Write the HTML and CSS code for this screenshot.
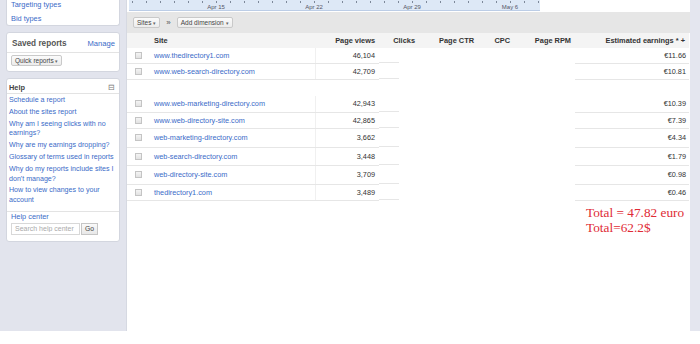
FILE: index.html
```html
<!DOCTYPE html>
<html lang="en">
<head>
    <meta charset="UTF-8">
    <title>Sites report</title>
    <link rel="stylesheet" href="styles.css">
</head>
<body>
    <div class="page">
        <!-- Left column -->
        <div class="sidebar">
            <div class="panel panel-top">
                <a class="side-link" href="#">Targeting types</a>
                <a class="side-link" href="#">Bid types</a>
            </div>

            <div class="panel">
                <div class="panel-head saved-head">
                    <span class="saved-title">Saved reports</span>
                    <a class="manage" href="#">Manage</a>
                </div>
                <div class="saved-body">
                    <span class="btn">Quick reports <span class="caret">&#9662;</span></span>
                </div>
            </div>

            <div class="panel">
                <div class="panel-head help-head">
                    <span class="help-title">Help</span>
                    <span class="collapse">&#8863;</span>
                </div>
                <ul class="help-links">
                    <li><a href="#">Schedule a report</a></li>
                    <li><a href="#">About the sites report</a></li>
                    <li><a href="#">Why am I seeing clicks with no earnings?</a></li>
                    <li><a href="#">Why are my earnings dropping?</a></li>
                    <li><a href="#">Glossary of terms used in reports</a></li>
                    <li><a href="#">Why do my reports include sites I don't manage?</a></li>
                    <li><a href="#">How to view changes to your account</a></li>
                </ul>
                <div class="help-center">
                    <a href="#">Help center</a>
                    <div class="search-row">
                        <input class="search" type="text" placeholder="Search help center">
                        <span class="go">Go</span>
                    </div>
                </div>
            </div>
        </div>

        <!-- Report area -->
        <div class="main">
            <div class="axis">
                <span class="axis-label l1">Apr 15</span>
                <span class="axis-label l2">Apr 22</span>
                <span class="axis-label l3">Apr 29</span>
                <span class="axis-label l4">May 6</span>
            </div>

            <div class="toolbar">
                <span class="btn">Sites <span class="caret">&#9662;</span></span>
                <span class="chev">&raquo;</span>
                <span class="btn">Add dimension <span class="caret">&#9662;</span></span>
            </div>

            <table class="report">
                <colgroup>
                    <col class="c-check">
                    <col class="c-site">
                    <col class="c-views">
                    <col class="c-clicks">
                    <col class="c-ctr">
                    <col class="c-cpc">
                    <col class="c-rpm">
                    <col class="c-earn">
                </colgroup>
                <thead>
                    <tr>
                        <th></th>
                        <th class="left">Site</th>
                        <th>Page views</th>
                        <th>Clicks</th>
                        <th>Page CTR</th>
                        <th>CPC</th>
                        <th>Page RPM</th>
                        <th>Estimated earnings * +</th>
                    </tr>
                </thead>
                <tbody>
                    <tr class="h15">
                        <td><span class="check"></span></td>
                        <td class="site"><a href="#">www.thedirectory1.com</a></td>
                        <td class="num views">46,104</td>
                        <td class="half"></td><td class="blank"></td><td class="blank"></td><td class="blank"></td>
                        <td class="num">€11.66</td>
                    </tr>
                    <tr>
                        <td><span class="check"></span></td>
                        <td class="site"><a href="#">www.web-search-directory.com</a></td>
                        <td class="num views">42,709</td>
                        <td class="half"></td><td class="blank"></td><td class="blank"></td><td class="blank"></td>
                        <td class="num">€10.81</td>
                    </tr>
                    <tr class="gap">
                        <td colspan="8"></td>
                    </tr>
                    <tr>
                        <td><span class="check"></span></td>
                        <td class="site"><a href="#">www.web-marketing-directory.com</a></td>
                        <td class="num views">42,943</td>
                        <td class="half"></td><td class="blank"></td><td class="blank"></td><td class="blank"></td>
                        <td class="num">€10.39</td>
                    </tr>
                    <tr>
                        <td><span class="check"></span></td>
                        <td class="site"><a href="#">www.web-directory-site.com</a></td>
                        <td class="num views">42,865</td>
                        <td class="half"></td><td class="blank"></td><td class="blank"></td><td class="blank"></td>
                        <td class="num">€7.39</td>
                    </tr>
                    <tr class="h19">
                        <td><span class="check"></span></td>
                        <td class="site"><a href="#">web-marketing-directory.com</a></td>
                        <td class="num views">3,662</td>
                        <td class="half"></td><td class="blank"></td><td class="blank"></td><td class="blank"></td>
                        <td class="num">€4.34</td>
                    </tr>
                    <tr class="h18">
                        <td><span class="check"></span></td>
                        <td class="site"><a href="#">web-search-directory.com</a></td>
                        <td class="num views">3,448</td>
                        <td class="half"></td><td class="blank"></td><td class="blank"></td><td class="blank"></td>
                        <td class="num">€1.79</td>
                    </tr>
                    <tr class="h19">
                        <td><span class="check"></span></td>
                        <td class="site"><a href="#">web-directory-site.com</a></td>
                        <td class="num views">3,709</td>
                        <td class="half"></td><td class="blank"></td><td class="blank"></td><td class="blank"></td>
                        <td class="num">€0.98</td>
                    </tr>
                    <tr>
                        <td><span class="check"></span></td>
                        <td class="site"><a href="#">thedirectory1.com</a></td>
                        <td class="num views">3,489</td>
                        <td class="half"></td><td class="blank"></td><td class="blank"></td><td class="blank"></td>
                        <td class="num">€0.46</td>
                    </tr>
                </tbody>
            </table>

            <div class="totals">
                Total = 47.82 euro<br>
                Total=62.2$
            </div>
        </div>

        <div class="edge"></div>
    </div>
</body>
</html>
```

FILE: styles.css
```css
/* Base */
* {
    margin: 0;
    padding: 0;
    box-sizing: border-box;
}

body {
    background: #fff;
    font-family: "Liberation Sans", Arial, sans-serif;
    font-size: 7.3px;
    color: #333;
    overflow: hidden;
}

a {
    color: #3a6bc8;
    text-decoration: none;
}

.page {
    display: flex;
    height: 331px;
    background: #e2e4ed;
    overflow: hidden;
}

/* Sidebar */
.sidebar {
    width: 127px;
    flex-shrink: 0;
    padding-left: 6px;
    padding-right: 6px;
    border-right: 1px solid #d6d9e2;
}

.panel {
    background: #fff;
    border: 1px solid #d3d6df;
    border-radius: 3px;
    margin-top: 6px;
}

.panel-top {
    margin-top: 0;
    border-top: 0;
    border-radius: 0 0 3px 3px;
    height: 26px;
    padding-left: 4px;
    display: flex;
    flex-direction: column;
    gap: 4px;
}

.side-link {
    font-size: 7.4px;
    line-height: 10px;
}

.panel-head {
    display: flex;
    justify-content: space-between;
    align-items: center;
    border-bottom: 1px solid #e3e3e3;
}

.saved-head {
    height: 20px;
    padding: 2px 4px 0 5px;
}

.saved-title {
    font-size: 8.2px;
    font-weight: bold;
    color: #555;
}

.manage {
    font-size: 7.6px;
}

.saved-body {
    height: 18px;
    padding: 2px 0 0 4px;
}

.help-head {
    height: 15px;
    padding: 2px 4px 0 2px;
}

.help-title {
    font-weight: bold;
    font-size: 7.4px;
    color: #444;
}

.collapse {
    font-size: 8px;
    color: #777;
}

.help-links {
    list-style: none;
    padding: 2px 0 3px 2px;
    border-bottom: 1px solid #e3e3e3;
}

.help-links li {
    font-size: 7.1px;
    line-height: 9.8px;
    margin-bottom: 2px;
}

.help-center {
    padding: 0 0 6px 4px;
    font-size: 7.4px;
    line-height: 10px;
}

.search-row {
    display: flex;
    align-items: center;
    margin-top: 1px;
}

.search {
    width: 69px;
    height: 12px;
    border: 1px solid #d8d8d8;
    font-family: inherit;
    font-size: 7px;
    padding-left: 3px;
}

.search::placeholder {
    color: #aaa;
}

.go {
    margin-left: 1px;
    height: 12px;
    padding: 0 3px;
    border: 1px solid #c6c6c6;
    background: linear-gradient(#fafafa, #e8e8e8);
    font-size: 6.8px;
    line-height: 10px;
    color: #444;
}

/* Buttons */
.btn {
    display: inline-block;
    height: 11px;
    padding: 0 3px;
    border: 1px solid #c9c9c9;
    border-radius: 2px;
    background: linear-gradient(#fbfbfb, #ececec);
    font-size: 6.5px;
    line-height: 9px;
    color: #444;
}

.caret {
    font-size: 5px;
    color: #666;
}

/* Main report */
.main {
    flex: 1;
    background: #fff;
    display: flex;
    flex-direction: column;
}

.axis {
    position: relative;
    width: 411px;
    height: 11px;
    margin-left: 2px;
    background:
        repeating-linear-gradient(to right, #7d8899 0, #7d8899 1px, transparent 1px, transparent 14px) 3px 1px / 100% 2px no-repeat,
        #dde8f6;
    border-bottom: 1px solid #bccde6;
}

.axis-label {
    position: absolute;
    top: 4px;
    font-size: 6px;
    line-height: 6px;
    color: #556;
    transform: translateX(-50%);
}

.l1 { left: 87px; }
.l2 { left: 185px; }
.l3 { left: 283px; }
.l4 { left: 381px; }

.toolbar {
    display: flex;
    align-items: center;
    gap: 6px;
    height: 21px;
    margin-top: 1px;
    padding-left: 6px;
    background: #e6e6e6;
}

.chev {
    font-size: 8px;
    color: #555;
}

.report {
    width: 562px;
    border-collapse: collapse;
    table-layout: fixed;
}

.c-check { width: 22px; }
.c-site { width: 166px; }
.c-views { width: 64px; }
.c-clicks { width: 40px; }
.c-ctr { width: 59px; }
.c-cpc { width: 36px; }
.c-rpm { width: 61px; }
.c-earn { width: 114px; }

.report th {
    height: 15px;
    background: #f4f4f4;
    font-weight: bold;
    font-size: 7.4px;
    color: #333;
    text-align: right;
    padding-right: 4px;
    white-space: nowrap;
}

.report th.left {
    text-align: left;
    padding-left: 5px;
}

.report td {
    height: 16px;
    border-bottom: 1px solid #e6e6e6;
    white-space: nowrap;
}

.report tr.h15 td { height: 15px; }
.report tr.h18 td { height: 18px; }
.report tr.h19 td { height: 19px; }

.report tr.gap td {
    height: 17px;
    border-bottom: 0;
}

.report td.blank {
    border-bottom-color: #fff;
}

/* the wiped middle columns keep only a short stub of the row line */
.report td.half {
    border-bottom-color: #fff;
    background: linear-gradient(#e6e6e6, #e6e6e6) left bottom / 20px 1px no-repeat;
}

.report td.site {
    padding-left: 5px;
}

.report td.num {
    text-align: right;
    padding-right: 3px;
    color: #333;
}

.report td.views {
    padding-right: 4px;
    border-left: 1px solid #f0f0f0;
}

.check {
    display: block;
    width: 7px;
    height: 7px;
    margin-left: 8px;
    border: 1px solid #c4c4c4;
    background: linear-gradient(#f4f4f4, #e2e2e2);
}

.totals {
    margin-top: 4px;
    padding-left: 459px;
    font-family: "Liberation Serif", "Times New Roman", serif;
    font-size: 13.3px;
    line-height: 15px;
    color: #e02b35;
}

.edge {
    width: 10px;
    flex-shrink: 0;
    background: #e4e6ef;
}
```
